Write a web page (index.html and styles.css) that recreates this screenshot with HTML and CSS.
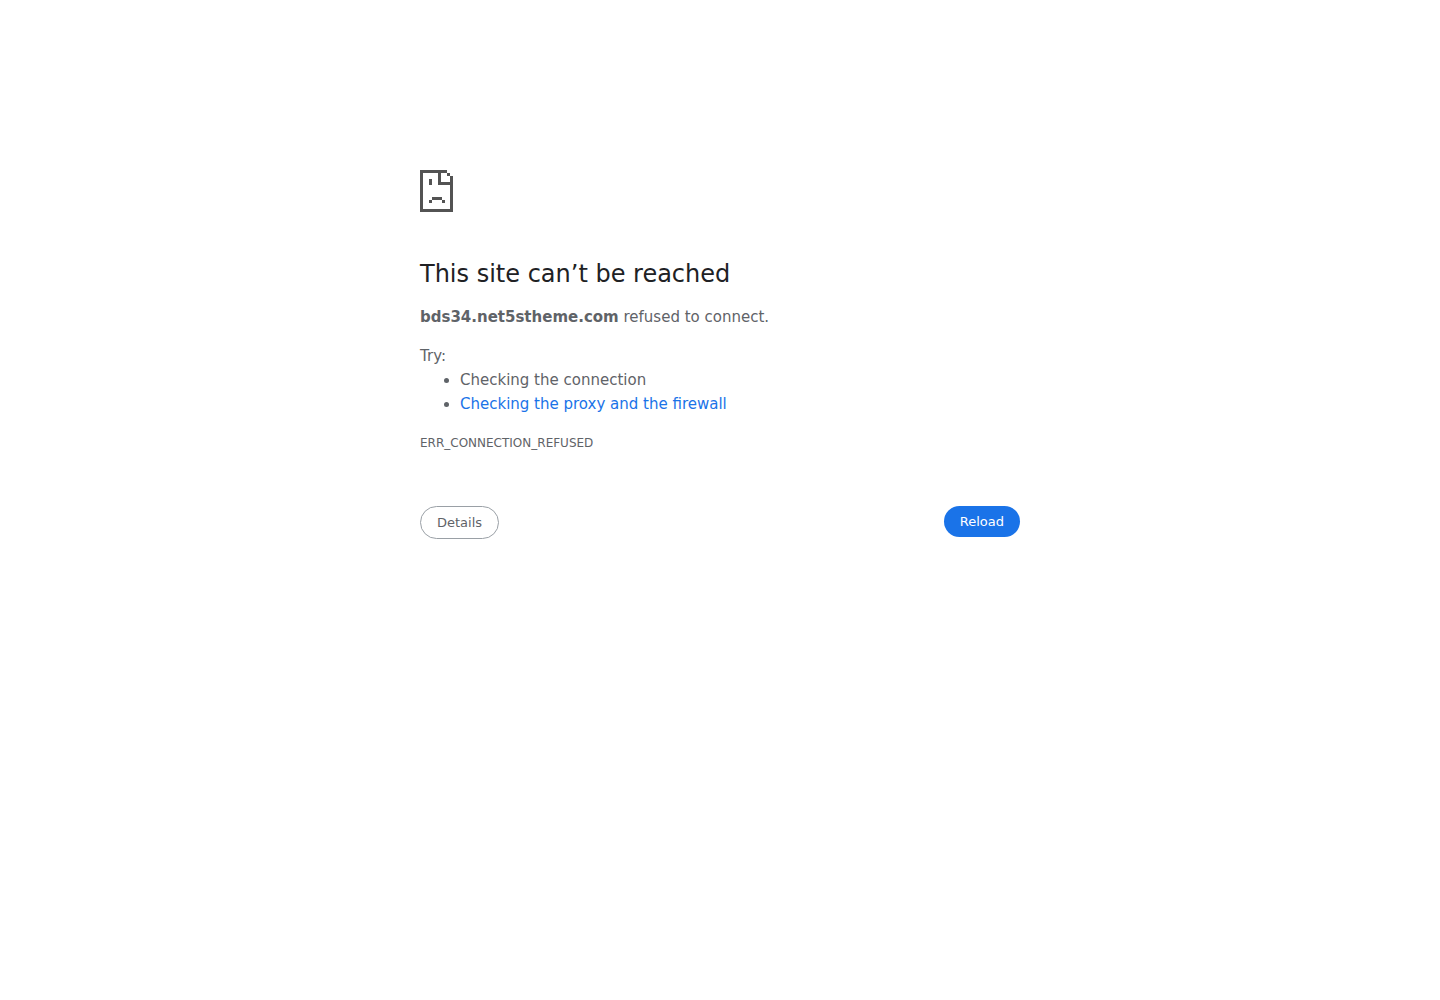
FILE: index.html
```html
<!DOCTYPE html>
<html lang="en">
<head>
    <meta charset="UTF-8">
    <meta name="viewport" content="width=device-width, initial-scale=1.0">
    <title>bds34.net5stheme.com</title>
    <link rel="stylesheet" href="styles.css">
</head>
<body>
    <main class="interstitial">
        <svg class="icon" viewBox="0 0 33 42" shape-rendering="crispEdges" aria-hidden="true">
            <path d="M0 0h27v3h3v3h3v36H0zM3 3v36h27V15H18V3zM21 3v9h9V6h-3V3z" fill-rule="evenodd"/>
            <path d="M9 9h3v6H9zM12 27h10v3H12zM9 30h3v3H9zM22 30h3v3h-3z"/>
        </svg>

        <h1>This site can’t be reached</h1>
        <p><strong>bds34.net5stheme.com</strong> refused to connect.</p>

        <div class="suggestions">
            <p>Try:</p>
            <ul>
                <li>Checking the connection</li>
                <li><a href="#buttons">Checking the proxy and the firewall</a></li>
            </ul>
        </div>

        <div class="error-code">ERR_CONNECTION_REFUSED</div>

        <div class="buttons" id="buttons">
            <button type="button" class="details">Details</button>
            <button type="button" class="reload" onclick="location.reload()">Reload</button>
        </div>
    </main>
</body>
</html>
```
FILE: styles.css
```css
body {
    margin: 0;
    background-color: #fff;
    color: #5f6368;
    font-family: "DejaVu Sans", sans-serif;
    font-size: 15px;
    line-height: 24px;
}
.interstitial {
    box-sizing: border-box;
    max-width: 600px;
    margin: 0 auto;
    padding-top: 170px;
}
.icon {
    display: block;
    width: 33px;
    height: 42px;
    margin-bottom: 47px;
    fill: #535353;
}
h1 {
    margin: 0 0 16px;
    color: #202124;
    font-size: 24px;
    font-weight: 500;
    line-height: 30px;
}
p {
    margin: 0;
}
.suggestions {
    margin-top: 15px;
}
ul {
    margin: 0;
    padding-left: 40px;
}
a {
    color: #1a73e8;
    text-decoration: none;
}
.error-code {
    margin-top: 15px;
    font-size: 12px;
}
.buttons {
    display: flex;
    justify-content: space-between;
    align-items: flex-start;
    margin-top: 51px;
}
button {
    padding: 8px 16px;
    border: none;
    border-radius: 20px;
    font-family: inherit;
    font-size: 13px;
    line-height: 15px;
    cursor: pointer;
}
.details {
    border: 1px solid #9aa0a6;
    background-color: #fff;
    color: #5f6368;
}
.reload {
    background-color: #1a73e8;
    color: #fff;
}
@media (max-width: 640px) {
    .interstitial {
        padding: 80px 24px 0;
    }
}
```
